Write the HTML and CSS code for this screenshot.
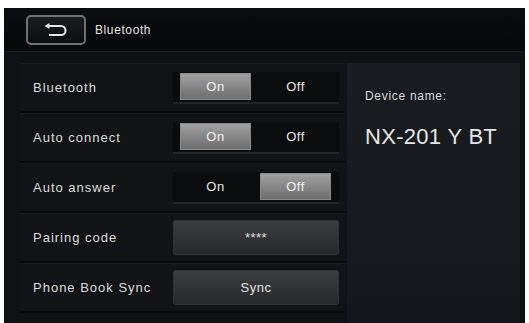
FILE: index.html
```html
<!DOCTYPE html>
<html>
  <head>
    <meta name="viewport" content="width=device-width, initial-scale=1">
    <link rel="stylesheet" href="styles.css">
  </head>

  <body>
    <div class="screen">
      <!-- Barra superior -->
      <header class="topbar">
        <button type="button" class="back">
          <svg width="26" height="14" viewBox="0 0 26 14">
            <path d="M5 3 H18 A4.5 4.5 0 0 1 18 12 H6" fill="none" stroke="#e6e6e6" stroke-width="2"/>
            <path d="M1.5 3 L6.5 0 L6.5 6 Z" fill="#e6e6e6"/>
          </svg>
        </button>
        <span class="title">Bluetooth</span>
      </header>

      <div class="main">
        <div class="settings">
          <div class="row">
            <span class="label">Bluetooth</span>
            <div class="toggle">
              <span class="opt active">On</span>
              <span class="opt">Off</span>
            </div>
          </div>
          <div class="row">
            <span class="label">Auto connect</span>
            <div class="toggle">
              <span class="opt active">On</span>
              <span class="opt">Off</span>
            </div>
          </div>
          <div class="row">
            <span class="label">Auto answer</span>
            <div class="toggle">
              <span class="opt">On</span>
              <span class="opt active">Off</span>
            </div>
          </div>
          <div class="row">
            <span class="label">Pairing code</span>
            <button type="button" class="wide">****</button>
          </div>
          <div class="row">
            <span class="label">Phone Book Sync</span>
            <button type="button" class="wide">Sync</button>
          </div>
        </div>

        <div class="device">
          <p class="device-label">Device name:</p>
          <p class="device-name">NX-201 Y BT</p>
        </div>
      </div>
    </div>
  </body>
</html>
```

FILE: styles.css
```css
html, body {
  margin: 0;
  background: #ffffff;
  font-family: "Liberation Sans", Arial, sans-serif;
}

body {
  padding: 8px 4px 0 4px;
  height: 323px;
  box-sizing: border-box;
  overflow: hidden;
}

.screen {
  width: 521px;
  height: 315px;
  background: #0e1013;
  display: flex;
  flex-direction: column;
}

.topbar {
  height: 44px;
  background: linear-gradient(#0b0c0f, #060709);
  display: flex;
  align-items: center;
  padding-left: 22px;
  border-bottom: 1px solid #191b1f;
  box-sizing: border-box;
}

.back {
  width: 60px;
  height: 30px;
  border: 2px solid #6e6f72;
  border-radius: 5px;
  background: linear-gradient(#1b1c1f, #0c0d0f);
  display: flex;
  align-items: center;
  justify-content: center;
  padding: 0;
}

.title {
  margin-left: 9px;
  color: #e4e4e4;
  font-size: 12px;
  letter-spacing: 0.6px;
}

.main {
  flex: 1;
  display: flex;
  padding: 11px 5px 0 16px;
  gap: 2px;
}

.settings {
  width: 325px;
}

.row {
  height: 50px;
  display: flex;
  align-items: center;
  border-bottom: 2px solid #08090b;
  border-top: 1px solid #1a1c20;
  box-sizing: border-box;
  background: #111316;
  padding-left: 13px;
}

.label {
  width: 140px;
  color: #dcdcdc;
  font-size: 13px;
  letter-spacing: 1px;
}

.toggle {
  width: 166px;
  height: 32px;
  background: #0b0c0e;
  border-bottom: 2px solid #222428;
  display: flex;
  align-items: center;
  padding: 0 8px 0 7px;
  box-sizing: border-box;
  gap: 9px;
}

.opt {
  flex: 1;
  height: 27px;
  display: flex;
  align-items: center;
  justify-content: center;
  color: #e8e8e8;
  font-size: 13px;
  letter-spacing: 0.5px;
}

.opt.active {
  background: linear-gradient(#a2a2a2, #6c6c6c);
  color: #f2f2f2;
  box-shadow: inset 0 0 0 1px #8a8a8a;
}

.wide {
  width: 166px;
  height: 35px;
  border: 1px solid #2e3034;
  border-radius: 2px;
  background: linear-gradient(#3b3d41, #26282c);
  color: #e0e0e0;
  font-family: "Liberation Sans", Arial, sans-serif;
  font-size: 13px;
  letter-spacing: 0.5px;
}

.device {
  width: 173px;
  background: linear-gradient(#191c20, #13161b);
  padding: 26px 0 0 18px;
  box-sizing: border-box;
}

.device-label {
  margin: 0;
  color: #d8d8d8;
  font-size: 12px;
  letter-spacing: 0.7px;
}

.device-name {
  margin: 21px 0 0 0;
  color: #e6e6e6;
  font-size: 22px;
  letter-spacing: 0.3px;
}
```
